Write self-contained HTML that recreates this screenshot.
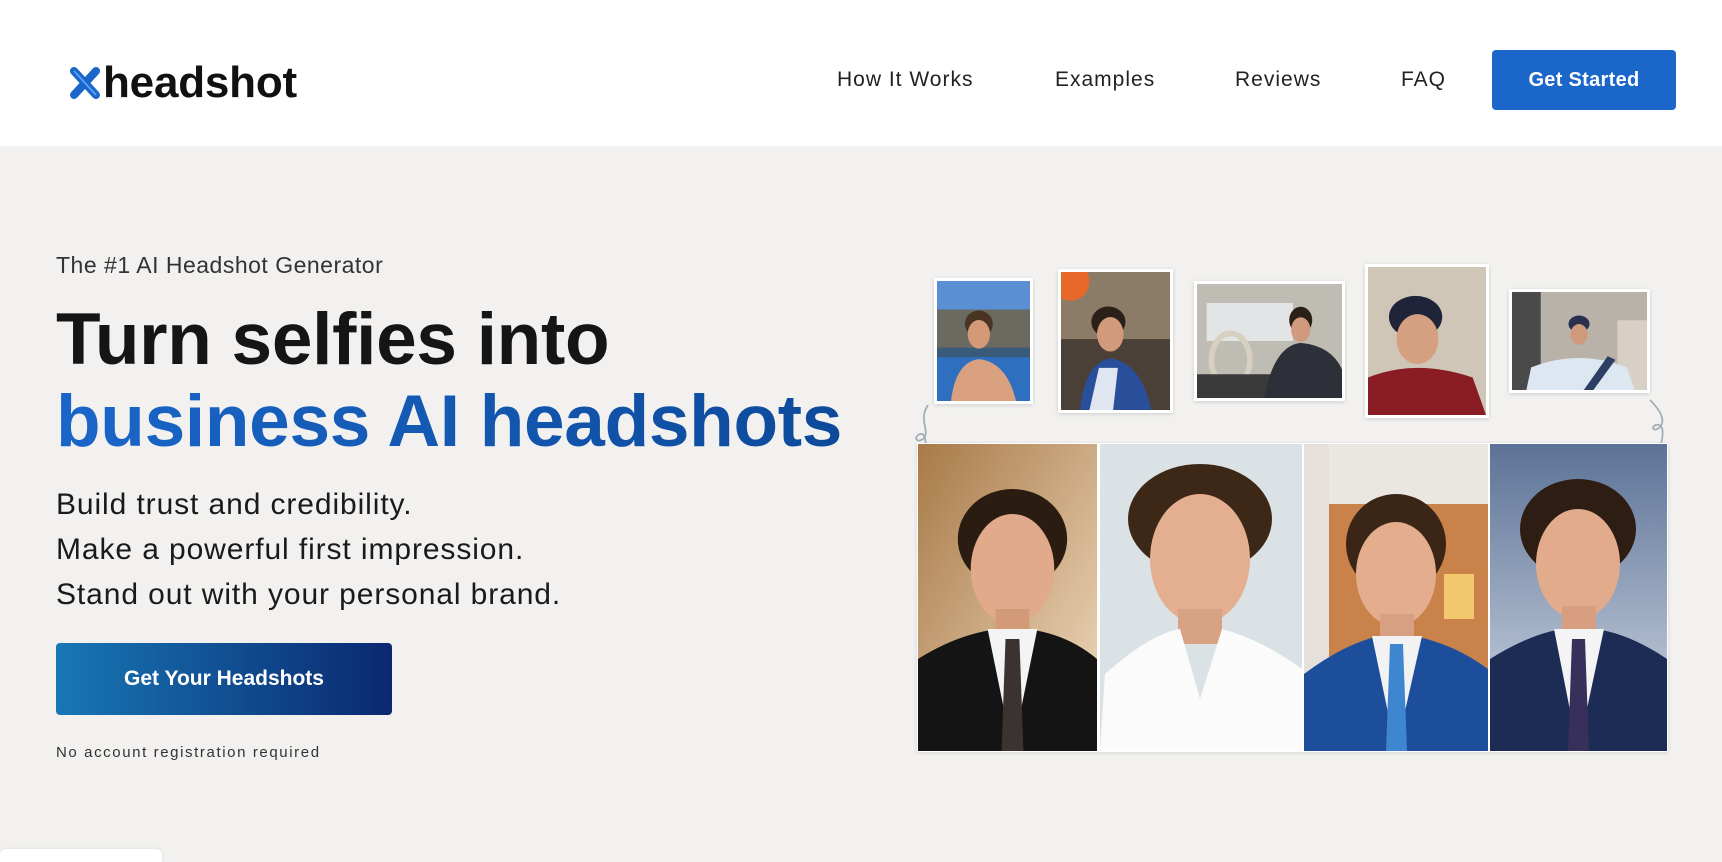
<!DOCTYPE html>
<html><head><meta charset="utf-8">
<style>
*{margin:0;padding:0;box-sizing:border-box}
html,body{width:1722px;height:862px;overflow:hidden;background:#f2f1ef;font-family:"Liberation Sans",sans-serif;position:relative}
.hdr{position:absolute;left:0;top:0;width:1722px;height:146px;background:#fff}
.logo{position:absolute;left:68px;top:58px;display:flex;align-items:center}
.logo span{font-weight:bold;font-size:44px;color:#111;letter-spacing:-0.2px;margin-left:1px}
.nav{position:absolute;top:68px;font-size:21px;color:#222;letter-spacing:1px}
.btn1{position:absolute;left:1492px;top:50px;width:184px;height:60px;background:#1a66c9;border-radius:4px;color:#fff;font-size:20px;font-weight:bold;text-align:center;line-height:60px;letter-spacing:0.3px}
.t{position:absolute;left:56px;white-space:nowrap}
.ph{position:absolute;border:3px solid #fff;box-shadow:0 1px 4px rgba(0,0,0,.15);overflow:hidden}
.ph svg,.big svg{display:block;width:100%;height:100%}
.big{position:absolute;top:444px;height:307px;overflow:hidden}
</style></head><body>
<div class="hdr">
 <div class="logo">
  <svg width="34" height="36" viewBox="0 0 34 36"><g fill="none" stroke="#1a66c9" stroke-width="8" stroke-linecap="round"><path d="M6 6 L28 30"/><path d="M28 6 L6 30"/></g><g fill="none" stroke="#5a9cff" stroke-width="2"><path d="M6 6 L28 30"/></g></svg>
  <span>headshot</span>
 </div>
 <div class="nav" style="left:837px">How It Works</div>
 <div class="nav" style="left:1055px">Examples</div>
 <div class="nav" style="left:1235px">Reviews</div>
 <div class="nav" style="left:1401px">FAQ</div>
 <div class="btn1">Get Started</div>
</div>

<div class="t" style="top:252px;font-size:23px;color:#333;letter-spacing:0.5px">The #1 AI Headshot Generator</div>
<div class="t" style="top:298px;font-size:73px;font-weight:bold;color:#151515;letter-spacing:-0.3px;line-height:84px">Turn selfies into</div>
<div class="t" style="top:380px;font-size:73px;font-weight:bold;letter-spacing:-0.3px;line-height:84px;background:linear-gradient(90deg,#1a66c9,#0d4a9a);-webkit-background-clip:text;color:transparent">business AI headshots</div>
<div class="t" style="top:482px;font-size:30px;color:#1a1a1a;line-height:45px;letter-spacing:0.9px">Build trust and credibility.<br>Make a powerful first impression.<br>Stand out with your personal brand.</div>
<div style="position:absolute;left:56px;top:643px;width:336px;height:72px;border-radius:4px;background:linear-gradient(90deg,#1877b5,#0a2870);color:#fff;font-weight:bold;font-size:21px;text-align:center;line-height:72px">Get Your Headshots</div>
<div class="t" style="top:744px;font-size:15px;color:#333;letter-spacing:1.6px">No account registration required</div>
<div style="position:absolute;left:0;top:849px;width:162px;height:20px;background:#fff;border-radius:6px;box-shadow:0 0 3px rgba(0,0,0,.1)"></div>

<svg style="position:absolute;left:910px;top:400px" width="60" height="75"><path d="M18 5 C8 20 20 30 14 38 C8 44 2 38 10 34 C16 32 16 45 16 52 C20 62 30 66 40 70 M32 62 L40 70 L30 72" fill="none" stroke="#9fb0b5" stroke-width="1.8"/></svg>
<svg style="position:absolute;left:1630px;top:395px" width="50" height="75"><path d="M20 5 C30 15 36 25 30 32 C24 38 20 32 26 30 C34 28 34 40 30 52 C26 60 20 65 12 68 M14 60 L12 68 L20 68" fill="none" stroke="#9fb0b5" stroke-width="1.8"/></svg>

<div class="ph" style="left:934px;top:278px;width:99px;height:126px"><svg viewBox="0 0 100 126" preserveAspectRatio="none"><rect width="100" height="126" fill="#3a5a7a"/><rect width="100" height="30" fill="#5b8fd4"/><rect y="30" width="100" height="40" fill="#6a6a60"/><rect y="80" width="100" height="46" fill="#2f6fbf"/><ellipse cx="45" cy="45" rx="15" ry="14" fill="#4a3423"/><ellipse cx="45" cy="56" rx="12" ry="15" fill="#d49a78"/><path d="M15 126 Q20 85 45 82 Q75 85 85 126Z" fill="#d9a180"/></svg></div>
<div class="ph" style="left:1058px;top:269px;width:115px;height:144px"><svg viewBox="0 0 115 144" preserveAspectRatio="none"><rect width="115" height="144" fill="#8c7b66"/><circle cx="10" cy="10" r="20" fill="#e8682a"/><rect x="0" y="70" width="115" height="74" fill="#4a4038"/><ellipse cx="50" cy="52" rx="18" ry="16" fill="#2b2018"/><ellipse cx="52" cy="65" rx="14" ry="18" fill="#d19a7c"/><path d="M20 144 Q25 95 52 90 Q85 95 95 144Z" fill="#2a4f9a"/><path d="M30 144 L40 100 L60 100 L55 144Z" fill="#dfe6f2"/></svg></div>
<div class="ph" style="left:1194px;top:281px;width:151px;height:120px"><svg viewBox="0 0 151 120" preserveAspectRatio="none"><rect width="151" height="120" fill="#bfbcb3"/><rect x="10" y="20" width="90" height="40" fill="#e2e4e6"/><ellipse cx="35" cy="80" rx="20" ry="28" fill="none" stroke="#d7d0c0" stroke-width="6"/><rect y="95" width="151" height="25" fill="#3a3a3a"/><ellipse cx="108" cy="38" rx="12" ry="14" fill="#2a2018"/><ellipse cx="108" cy="48" rx="10" ry="13" fill="#cf9a7e"/><path d="M70 120 Q80 65 108 62 Q140 65 151 90 L151 120Z" fill="#2d3038"/></svg></div>
<div class="ph" style="left:1365px;top:264px;width:124px;height:154px"><svg viewBox="0 0 124 154" preserveAspectRatio="none"><rect width="124" height="154" fill="#cfc6b8"/><ellipse cx="50" cy="52" rx="28" ry="22" fill="#1f2438"/><ellipse cx="52" cy="75" rx="22" ry="26" fill="#d4a080"/><path d="M0 154 L0 115 Q50 95 110 115 L124 154Z" fill="#8a1c24"/></svg></div>
<div class="ph" style="left:1509px;top:289px;width:141px;height:104px"><svg viewBox="0 0 141 104" preserveAspectRatio="none"><rect width="141" height="104" fill="#b8b2a8"/><rect width="30" height="104" fill="#4a4a4a"/><rect x="110" y="30" width="31" height="74" fill="#d8cfc5"/><ellipse cx="70" cy="34" rx="11" ry="9" fill="#2a3050"/><ellipse cx="70" cy="45" rx="9" ry="11" fill="#cd9a7c"/><path d="M15 104 L20 80 Q70 60 120 80 L128 104Z" fill="#dde7f2"/><path d="M75 104 L100 68 L108 72 L85 104Z" fill="#2e3f66"/></svg></div>

<div style="position:absolute;left:917px;top:443px;width:751px;height:309px;background:#fff;box-shadow:0 1px 4px rgba(0,0,0,.12)"></div>
<div class="big" style="left:918px;width:179px"><svg viewBox="0 0 180 307" preserveAspectRatio="none"><defs><linearGradient id="g1" x1="0" y1="0" x2="1" y2="1"><stop offset="0" stop-color="#a87a48"/><stop offset="1" stop-color="#f1dcc0"/></linearGradient></defs><rect width="180" height="307" fill="url(#g1)"/><ellipse cx="95" cy="95" rx="55" ry="50" fill="#2b1c12"/><ellipse cx="95" cy="125" rx="42" ry="55" fill="#e1ab8b"/><rect x="78" y="165" width="34" height="30" fill="#d39a7a"/><path d="M0 307 L0 215 Q40 190 80 185 L95 307 L110 185 Q150 190 180 215 L180 307Z" fill="#141414"/><path d="M70 185 L95 307 L120 185Z" fill="#f4f4f4"/><path d="M88 195 L102 195 L106 307 L84 307Z" fill="#3a3330"/></svg></div>
<div class="big" style="left:1100px;width:202px"><svg viewBox="0 0 202 307" preserveAspectRatio="none"><rect width="202" height="307" fill="#dbe2e6"/><ellipse cx="100" cy="75" rx="72" ry="55" fill="#3d2818"/><ellipse cx="100" cy="115" rx="50" ry="65" fill="#e4ae90"/><rect x="78" y="165" width="44" height="35" fill="#d8a285"/><path d="M0 307 L5 230 Q50 190 80 185 L100 255 L122 185 Q160 195 202 225 L202 307Z" fill="#fbfbfb"/></svg></div>
<div class="big" style="left:1304px;width:184px"><svg viewBox="0 0 184 307" preserveAspectRatio="none"><rect width="184" height="307" fill="#c8824a"/><rect width="184" height="60" fill="#eae6e2"/><rect x="0" y="0" width="25" height="307" fill="#e5e0da"/><rect x="140" y="130" width="30" height="45" fill="#f3c76e"/><ellipse cx="92" cy="100" rx="50" ry="50" fill="#3a2517"/><ellipse cx="92" cy="130" rx="40" ry="52" fill="#e4ae8e"/><rect x="76" y="170" width="34" height="28" fill="#d8a082"/><path d="M0 307 L0 230 Q40 200 75 192 L92 307 L110 192 Q150 200 184 225 L184 307Z" fill="#1d4e9c"/><path d="M68 192 L92 307 L118 192Z" fill="#f2f2f2"/><path d="M86 200 L99 200 L103 307 L82 307Z" fill="#3f86d0"/></svg></div>
<div class="big" style="left:1490px;width:177px"><svg viewBox="0 0 177 307" preserveAspectRatio="none"><defs><linearGradient id="g4" x1="0" y1="0" x2="0" y2="1"><stop offset="0" stop-color="#5c7296"/><stop offset="1" stop-color="#d3dbe6"/></linearGradient></defs><rect width="177" height="307" fill="url(#g4)"/><ellipse cx="88" cy="85" rx="58" ry="50" fill="#2e1d12"/><ellipse cx="88" cy="120" rx="42" ry="55" fill="#e2ab8b"/><rect x="72" y="162" width="34" height="30" fill="#d79e80"/><path d="M0 307 L0 215 Q40 190 72 185 L88 307 L106 185 Q140 190 177 215 L177 307Z" fill="#1c2c55"/><path d="M64 185 L88 307 L114 185Z" fill="#f4f4f4"/><path d="M82 195 L95 195 L99 307 L78 307Z" fill="#37305a"/></svg></div>
</body></html>
